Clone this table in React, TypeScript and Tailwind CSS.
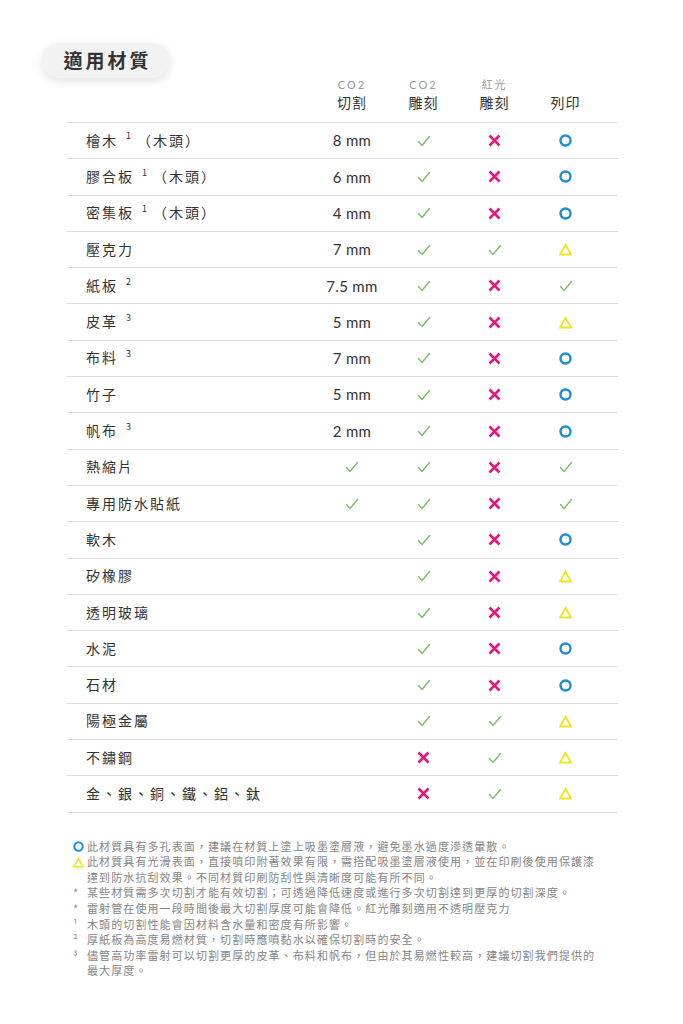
import React from "react";

type Mark = "check" | "x" | "o" | "tri" | "" | string;

const rows: { name: React.ReactNode; cut: Mark; co2: Mark; red: Mark; print: Mark }[] = [
  { name: <>檜木<Sup n="1" />（木頭）</>, cut: "8 mm", co2: "check", red: "x", print: "o" },
  { name: <>膠合板<Sup n="1" />（木頭）</>, cut: "6 mm", co2: "check", red: "x", print: "o" },
  { name: <>密集板<Sup n="1" />（木頭）</>, cut: "4 mm", co2: "check", red: "x", print: "o" },
  { name: "壓克力", cut: "7 mm", co2: "check", red: "check", print: "tri" },
  { name: <>紙板<Sup n="2" /></>, cut: "7.5 mm", co2: "check", red: "x", print: "check" },
  { name: <>皮革<Sup n="3" /></>, cut: "5 mm", co2: "check", red: "x", print: "tri" },
  { name: <>布料<Sup n="3" /></>, cut: "7 mm", co2: "check", red: "x", print: "o" },
  { name: "竹子", cut: "5 mm", co2: "check", red: "x", print: "o" },
  { name: <>帆布<Sup n="3" /></>, cut: "2 mm", co2: "check", red: "x", print: "o" },
  { name: "熱縮片", cut: "check", co2: "check", red: "x", print: "check" },
  { name: "專用防水貼紙", cut: "check", co2: "check", red: "x", print: "check" },
  { name: "軟木", cut: "", co2: "check", red: "x", print: "o" },
  { name: "矽橡膠", cut: "", co2: "check", red: "x", print: "tri" },
  { name: "透明玻璃", cut: "", co2: "check", red: "x", print: "tri" },
  { name: "水泥", cut: "", co2: "check", red: "x", print: "o" },
  { name: "石材", cut: "", co2: "check", red: "x", print: "o" },
  { name: "陽極金屬", cut: "", co2: "check", red: "check", print: "tri" },
  { name: "不鏽鋼", cut: "", co2: "x", red: "check", print: "tri" },
  { name: "金、銀、銅、鐵、鋁、鈦", cut: "", co2: "x", red: "check", print: "tri" },
];

function Sup({ n }: { n: string }) {
  return <span className="relative -top-[4px] ml-[8px] mr-[6px] text-[9px] tracking-normal">{n}</span>;
}

function Check() {
  return (
    <svg width="14" height="12" viewBox="0 0 14 12">
      <path d="M1.5 6.5 L5 10.5 L12.5 1.5" fill="none" stroke="#7dbd68" strokeWidth="1.4" strokeLinecap="round" strokeLinejoin="round" />
    </svg>
  );
}

function Cross() {
  return (
    <svg width="13" height="13" viewBox="0 0 13 13">
      <path d="M1.5 1.5 L11.5 11.5 M11.5 1.5 L1.5 11.5" stroke="#e2177f" strokeWidth="2.6" strokeLinecap="butt" />
    </svg>
  );
}

function Ring({ size = 13 }: { size?: number }) {
  return (
    <svg width={size} height={size} viewBox="0 0 13 13">
      <circle cx="6.5" cy="6.5" r="5" fill="none" stroke="#1d8fd8" strokeWidth="2.4" />
    </svg>
  );
}

function Tri({ size = 13 }: { size?: number }) {
  return (
    <svg width={size} height={size} viewBox="0 0 13 13">
      <path d="M6.5 1.8 L12 11.5 L1 11.5 Z" fill="none" stroke="#f2e41a" strokeWidth="1.8" strokeLinejoin="miter" />
    </svg>
  );
}

function Cell({ v }: { v: Mark }) {
  let inner: React.ReactNode = null;
  if (v === "check") inner = <Check />;
  else if (v === "x") inner = <Cross />;
  else if (v === "o") inner = <Ring />;
  else if (v === "tri") inner = <Tri />;
  else if (v) inner = <span className="text-[15px] tracking-[0.3px] text-[#333]" style={{ fontFamily: "Lato, 'Noto Sans', sans-serif" }}>{v}</span>;
  return <div className="flex items-center justify-center">{inner}</div>;
}

const grid = "grid grid-cols-[249px_72px_71px_71px_71px]";

const notes: { mark: React.ReactNode; lines: string[] }[] = [
  { mark: <Ring size={11} />, lines: ["此材質具有多孔表面，建議在材質上塗上吸墨塗層液，避免墨水過度滲透暈散。"] },
  { mark: <Tri size={11} />, lines: ["此材質具有光滑表面，直接噴印附著效果有限，需搭配吸墨塗層液使用，並在印刷後使用保護漆", "達到防水抗刮效果。不同材質印刷防刮性與清晰度可能有所不同。"] },
  { mark: "*", lines: ["某些材質需多次切割才能有效切割；可透過降低速度或進行多次切割達到更厚的切割深度。"] },
  { mark: "*", lines: ["雷射管在使用一段時間後最大切割厚度可能會降低。紅光雕刻適用不透明壓克力"] },
  { mark: "¹", lines: ["木頭的切割性能會因材料含水量和密度有所影響。"] },
  { mark: "²", lines: ["厚紙板為高度易燃材質，切割時應噴黏水以確保切割時的安全。"] },
  { mark: "³", lines: ["儘管高功率雷射可以切割更厚的皮革、布料和帆布，但由於其易燃性較高，建議切割我們提供的", "最大厚度。"] },
];

export default function App() {
  return (
    <div className="min-h-[1024px] w-[683px] bg-white pt-[43px]" style={{ fontFamily: "'Noto Sans CJK TC', 'Noto Sans', sans-serif" }}>
      <div className="ml-[42px] flex h-[35px] w-[128px] items-center justify-center rounded-full bg-[#f3f2f3] shadow-[0_3px_10px_rgba(0,0,0,0.12)]">
        <span className="pl-[3px] text-[19px] font-bold tracking-[3px] text-[#333]">適用材質</span>
      </div>

      <div className="ml-[67px] w-[551px]">
        <div className={`${grid} -mt-[2px] h-[46px] items-start`}>
          <div />
          {[["CO2", "切割"], ["CO2", "雕刻"], ["紅光", "雕刻"], ["", "列印"]].map(([a, b], i) => (
            <div key={i} className="flex flex-col items-center">
              <span className="h-[17px] text-[11px] leading-[17px] tracking-[2px] text-[#9a9a9a]" style={{ fontFamily: i < 2 ? "Lato, 'Noto Sans', sans-serif" : undefined }}>{a}</span>
              <span className="text-[14px] leading-[18px] tracking-[1px] text-[#333]">{b}</span>
            </div>
          ))}
        </div>

        <div className="border-t border-[#dcdcdc]">
          {rows.map((r, i) => (
            <div key={i} className={`${grid} h-[36.3px] border-b border-[#dcdcdc]`}>
              <div className="flex items-center pl-[19px] pb-[1px] text-[14px] tracking-[2px] text-[#333]">{r.name}</div>
              <Cell v={r.cut} />
              <Cell v={r.co2} />
              <Cell v={r.red} />
              <Cell v={r.print} />
            </div>
          ))}
        </div>
      </div>

      <div className="ml-[73px] mt-[26px] flex flex-col text-[11px] leading-[15.6px] tracking-[1.1px] text-[#858585]">
        {notes.map((n, i) => (
          <div key={i} className="flex">
            <div className="flex h-[15.6px] w-[14px] shrink-0 items-center text-[#888]">{n.mark}</div>
            <div>
              {n.lines.map((l, j) => (
                <div key={j}>{l}</div>
              ))}
            </div>
          </div>
        ))}
      </div>
    </div>
  );
}
